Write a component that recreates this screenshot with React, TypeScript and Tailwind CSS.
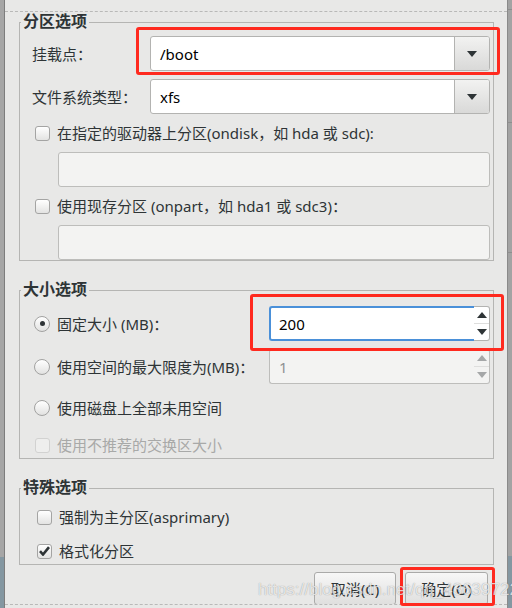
const FONT = "font-['Noto_Sans','Noto_Sans_CJK_SC',sans-serif]";

function DownArrow({ color = '#2e3436' }: { color?: string }) {
  return (
    <svg width="10" height="6" viewBox="0 0 10 6">
      <path d="M0 0h10L5 6z" fill={color} />
    </svg>
  );
}

function UpArrow({ color = '#2e3436' }: { color?: string }) {
  return (
    <svg width="10" height="6" viewBox="0 0 10 6">
      <path d="M0 6h10L5 0z" fill={color} />
    </svg>
  );
}

function Combo({ value }: { value: string }) {
  return (
    <div className="flex h-[35px] flex-1 overflow-hidden rounded-[3px] border border-[#b3b3b1] bg-white">
      <div className="flex flex-1 items-center pl-[9px] text-black">{value}</div>
      <div className="flex w-[35px] items-center justify-center border-l border-[#b3b3b1] bg-gradient-to-b from-[#f2f2f1] to-[#d9d9d8]">
        <DownArrow />
      </div>
    </div>
  );
}

function Entry() {
  return <div className="h-[35px] flex-1 rounded-[3px] border border-[#bdbdbb] bg-[#f3f3f2]" />;
}

function Check({ checked = false, disabled = false }: { checked?: boolean; disabled?: boolean }) {
  return (
    <div
      className={`flex h-[15px] w-[15px] shrink-0 items-center justify-center rounded-[3px] border ${
        disabled
          ? 'border-[#d2d2d1] bg-[#eeeeed]'
          : 'border-[#a4a4a3] bg-gradient-to-b from-white to-[#e3e3e2]'
      }`}
    >
      {checked && (
        <svg width="11" height="10" viewBox="0 0 11 10">
          <path d="M1 5.2l3 3.3L10 1.2" fill="none" stroke="#2e3436" strokeWidth="2.6" />
        </svg>
      )}
    </div>
  );
}

function Radio({ checked = false }: { checked?: boolean }) {
  return (
    <div className="flex h-[16px] w-[16px] shrink-0 items-center justify-center rounded-full border border-[#a2a2a1] bg-gradient-to-b from-white to-[#e2e2e1]">
      {checked && <div className="h-[5px] w-[5px] rounded-full bg-[#2e3436]" />}
    </div>
  );
}

function Spin({ value, active }: { value: string; active?: boolean }) {
  return (
    <div className="flex h-[35px] w-[221px]">
      <div
        className={`flex flex-1 items-center rounded-l-[3px] pl-[8px] ${
          active
            ? 'border-2 border-r-0 border-[#4a90d9] bg-white text-black'
            : 'border border-r-0 border-[#bdbdbb] bg-[#f3f3f2] pl-[9px] text-[#8e9091]'
        }`}
      >
        {value}
      </div>
      <div
        className={`flex w-[16px] flex-col rounded-r-[3px] border border-l-0 ${
          active ? 'border-[#b3b3b1] bg-white' : 'border-[#bdbdbb] bg-[#f3f3f2]'
        }`}
      >
        <div className="flex flex-1 items-center justify-center border-b border-[#dededd]">
          <UpArrow color={active ? '#2e3436' : '#a5a7a8'} />
        </div>
        <div className="flex flex-1 items-center justify-center">
          <DownArrow color={active ? '#2e3436' : '#a5a7a8'} />
        </div>
      </div>
    </div>
  );
}

function Group({ title, className, children }: { title: string; className?: string; children: React.ReactNode }) {
  return (
    <fieldset className={`border border-[#b5b5b3] ${className ?? ''}`}>
      <legend className="ml-[1px] px-[2px] pb-[2px] text-[16px] leading-[18px] font-bold text-[#2e3436]">{title}</legend>
      {children}
    </fieldset>
  );
}

export default function App() {
  return (
    <div className={`relative flex h-[608px] w-[512px] overflow-hidden bg-[#a5a5a5] text-[15px] leading-[22px] text-[#2e3436] ${FONT}`}>
      {/* window behind, left edge */}
      <div className="flex w-[5px] flex-col border-r border-[#7d7d7d]">
        <div className="h-[557px] bg-[#a6a6a6]" />
        <div className="flex-1 bg-[#8497a1]" />
      </div>

      {/* dialog */}
      <div className="flex w-[502px] flex-col bg-[#e8e8e7]">
        <div className="h-[11px]" />
        <div className="flex h-[594px] flex-col overflow-hidden border-y border-dashed border-[#b9b9b8] pl-[14px] pr-[13px]">
          <Group title="分区选项">
            <div className="flex flex-col gap-[8px] pl-[12px] pr-[3px] pt-[4px]">
              <div className="flex items-center">
                <span className="w-[118px]">挂载点：</span>
                <Combo value="/boot" />
              </div>
              <div className="flex items-center">
                <span className="w-[118px]">文件系统类型：</span>
                <Combo value="xfs" />
              </div>
              <div className="flex h-[22px] items-center gap-[7px] pl-[3px]">
                <Check />
                <span>在指定的驱动器上分区(ondisk，如 hda 或 sdc):</span>
              </div>
              <div className="flex pl-[26px]">
                <Entry />
              </div>
              <div className="flex h-[22px] items-center gap-[7px] pl-[3px]">
                <Check />
                <span>使用现存分区 (onpart，如 hda1 或 sdc3)：</span>
              </div>
              <div className="flex pl-[26px]">
                <Entry />
              </div>
            </div>
          </Group>

          <Group title="大小选项" className="mt-[19px]">
            <div className="flex flex-col gap-[8px] pl-[14px] pr-[3px] pt-[6px]">
              <div className="flex items-center">
                <div className="flex flex-1 items-center gap-[7px]">
                  <Radio checked />
                  <span>固定大小 (MB)：</span>
                </div>
                <Spin value="200" active />
              </div>
              <div className="flex items-center">
                <div className="flex flex-1 items-center gap-[7px]">
                  <Radio />
                  <span>使用空间的最大限度为(MB)：</span>
                </div>
                <Spin value="1" />
              </div>
              <div className="flex h-[32px] items-center gap-[7px]">
                <Radio />
                <span>使用磁盘上全部未用空间</span>
              </div>
              <div className="flex h-[26px] items-center gap-[7px] pl-[1px]">
                <Check disabled />
                <span className="text-[#a8a9a8]">使用不推荐的交换区大小</span>
              </div>
            </div>
          </Group>

          <Group title="特殊选项" className="mt-[19px]">
            <div className="flex flex-col gap-[8px] pl-[17px] pt-[6px]">
              <div className="flex h-[26px] items-center gap-[7px]">
                <Check />
                <span>强制为主分区(asprimary)</span>
              </div>
              <div className="flex h-[26px] items-center gap-[7px]">
                <Check checked />
                <span>格式化分区</span>
              </div>
            </div>
          </Group>

          <div className="mt-[7px] flex justify-end gap-[9px] pr-[6px]">
            <div className="flex h-[33px] w-[82px] shrink-0 items-center justify-center rounded-[3px] border border-[#aaaaa9] bg-gradient-to-b from-[#f7f7f7] to-[#dfdfde]">
              取消(C)
            </div>
            <div className="flex h-[33px] w-[83px] shrink-0 items-center justify-center rounded-[3px] border border-[#aaaaa9] bg-gradient-to-b from-[#f7f7f7] to-[#dfdfde]">
              确定(O)
            </div>
          </div>
        </div>
      </div>

      {/* window behind, right edge */}
      <div className="flex w-[5px] flex-col border-l border-[#8a8a8a]">
        <div className="h-[10px] border-b border-[#8e8e8e] bg-[#a3a3a3]" />
        <div className="h-[113px] border-b border-[#8e8e8e] bg-[#a3a3a3]" />
        <div className="h-[130px] border-b border-[#8e8e8e] bg-[#a3a3a3]" />
        <div className="h-[303px] bg-[#a3a3a3]" />
        <div className="flex-1 bg-[#8497a1]" />
      </div>

      {/* annotation boxes */}
      <div className="absolute left-[136px] top-[27px] h-[48px] w-[364px] rounded-[3px] border-[3px] border-[#ff2a1f]" />
      <div className="absolute left-[250px] top-[294px] h-[57px] w-[254px] rounded-[3px] border-[3px] border-[#ff2a1f]" />
      <div className="absolute left-[400px] top-[567px] h-[39px] w-[95px] rounded-[3px] border-[3px] border-[#ff2a1f]" />

      {/* watermark */}
      <div className="absolute left-[258px] top-[579px] font-['Liberation_Sans',sans-serif] text-[17px] leading-[22px] text-white/75 [text-shadow:0_0_1px_rgba(0,0,0,0.4)]">
        https://blog.csdn.net/qq_43639722
      </div>
    </div>
  );
}
